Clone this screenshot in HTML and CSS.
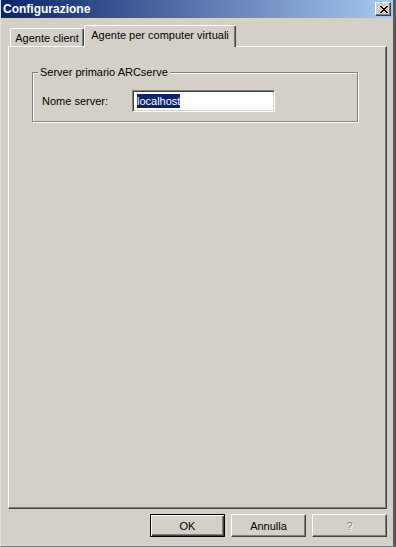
FILE: index.html
```html
<!doctype html>
<html lang="it">
<head>
	<meta charset="UTF-8">
	<title>Configurazione</title>
	<link rel="stylesheet" href="styles.css">
</head>
<body>
	<div class="window">
		<div class="titlebar">
			<span class="title">Configurazione</span>
			<div class="close">
				<svg width="8" height="7" viewBox="0 0 8 7" shape-rendering="crispEdges">
					<path d="M0 0h2v1h-2zM6 0h2v1h-2zM1 1h2v1h-2zM5 1h2v1h-2zM2 2h4v1h-4zM3 3h2v1h-2zM2 4h4v1h-4zM1 5h2v1h-2zM5 5h2v1h-2zM0 6h2v1h-2zM6 6h2v1h-2z" fill="#000"/>
				</svg>
			</div>
		</div>
		<div class="content">
			<div class="tabs">
				<div class="tab">Agente client</div>
				<div class="tab active">Agente per computer virtuali</div>
			</div>
			<div class="panel">
				<fieldset class="group">
					<legend>Server primario ARCserve</legend>
					<div class="row">
						<label class="label">Nome server:</label>
						<div class="field"><span class="sel">localhost</span></div>
					</div>
				</fieldset>
			</div>
			<div class="buttons">
				<div class="btn default">OK</div>
				<div class="btn">Annulla</div>
				<div class="btn disabled">?</div>
			</div>
		</div>
	</div>
</body>
</html>
```

FILE: styles.css
```css
body{
	margin: 0;
	background: #d4d0c8;
	font-family: "Liberation Sans", Arial, sans-serif;
	font-size: 11px;
	color: #000;
}
.window{
	width: 396px;
	height: 547px;
	box-sizing: border-box;
	background: #d4d0c8;
	border-left: 1px solid #e4e1da;
	border-right: 3px solid #5a5a5a;
	border-bottom: 1px solid #808080;
	display: flex;
	flex-direction: column;
}
.titlebar{
	height: 18px;
	flex: none;
	display: flex;
	align-items: center;
	justify-content: space-between;
	background: linear-gradient(to right, #0a246a, #a6caf0);
	padding-left: 2px;
}
.title{
	color: #fff;
	font-weight: bold;
	font-size: 12px;
}
.close{
	width: 16px;
	height: 14px;
	box-sizing: border-box;
	margin-right: 2px;
	background: #d4d0c8;
	border-top: 1px solid #fff;
	border-left: 1px solid #fff;
	border-right: 1px solid #404040;
	border-bottom: 1px solid #404040;
	box-shadow: inset -1px -1px 0 #808080;
	display: flex;
	align-items: center;
	justify-content: center;
	padding-left: 1px;
}
.close svg{
	display: block;
}
.content{
	flex: 1;
	display: flex;
	flex-direction: column;
	padding: 7px 6px 0 7px;
}
.tabs{
	height: 21px;
	display: flex;
	align-items: flex-end;
	padding-left: 2px;
	position: relative;
	z-index: 2;
}
.tab{
	box-sizing: border-box;
	height: 18px;
	width: 74px;
	border-top: 1px solid #fff;
	border-left: 1px solid #fff;
	border-right: 1px solid #404040;
	box-shadow: inset -1px 0 0 #808080;
	border-radius: 2px 2px 0 0;
	padding-top: 3px;
	text-align: center;
	background: #d4d0c8;
}
.tab.active{
	width: 152px;
	height: 22px;
	margin-bottom: -1px;
	padding-top: 3px;
}
.panel{
	height: 463px;
	box-sizing: border-box;
	border-top: 1px solid #fff;
	border-left: 1px solid #fff;
	border-right: 1px solid #404040;
	border-bottom: 1px solid #404040;
	box-shadow: inset -1px -1px 0 #808080;
	padding: 19px 0 0 23px;
}
.group{
	width: 326px;
	box-sizing: border-box;
	margin: 0;
	border: 1px solid #808080;
	box-shadow: 1px 1px 0 #fff, inset 1px 1px 0 #fff;
	padding: 11px 0 9px 5px;
}
.group legend{
	padding: 0 2px;
	line-height: 13px;
	background: #d4d0c8;
}
.row{
	display: flex;
	align-items: center;
	margin-left: 4px;
}
.label{
	width: 90px;
}
.field{
	width: 143px;
	height: 22px;
	box-sizing: border-box;
	background: #fff;
	border-top: 1px solid #808080;
	border-left: 1px solid #808080;
	border-right: 1px solid #fff;
	border-bottom: 1px solid #fff;
	box-shadow: inset 1px 1px 0 #404040, inset -1px -1px 0 #d4d0c8;
	padding: 3px 0 0 4px;
}
.sel{
	display: inline-block;
	background: #0a246a;
	color: #fff;
	line-height: 14px;
}
.buttons{
	display: flex;
	justify-content: flex-end;
	gap: 6px;
	margin-top: 5px;
}
.btn{
	width: 75px;
	height: 23px;
	box-sizing: border-box;
	border-top: 1px solid #fff;
	border-left: 1px solid #fff;
	border-right: 1px solid #404040;
	border-bottom: 1px solid #404040;
	box-shadow: inset -1px -1px 0 #808080;
	display: flex;
	align-items: center;
	justify-content: center;
}
.btn.default{
	border: 1px solid #000;
	box-shadow: inset 1px 1px 0 #fff, inset -1px -1px 0 #404040, inset -2px -2px 0 #808080;
}
.btn.disabled{
	color: #808080;
	text-shadow: 1px 1px 0 #fff;
}
```
